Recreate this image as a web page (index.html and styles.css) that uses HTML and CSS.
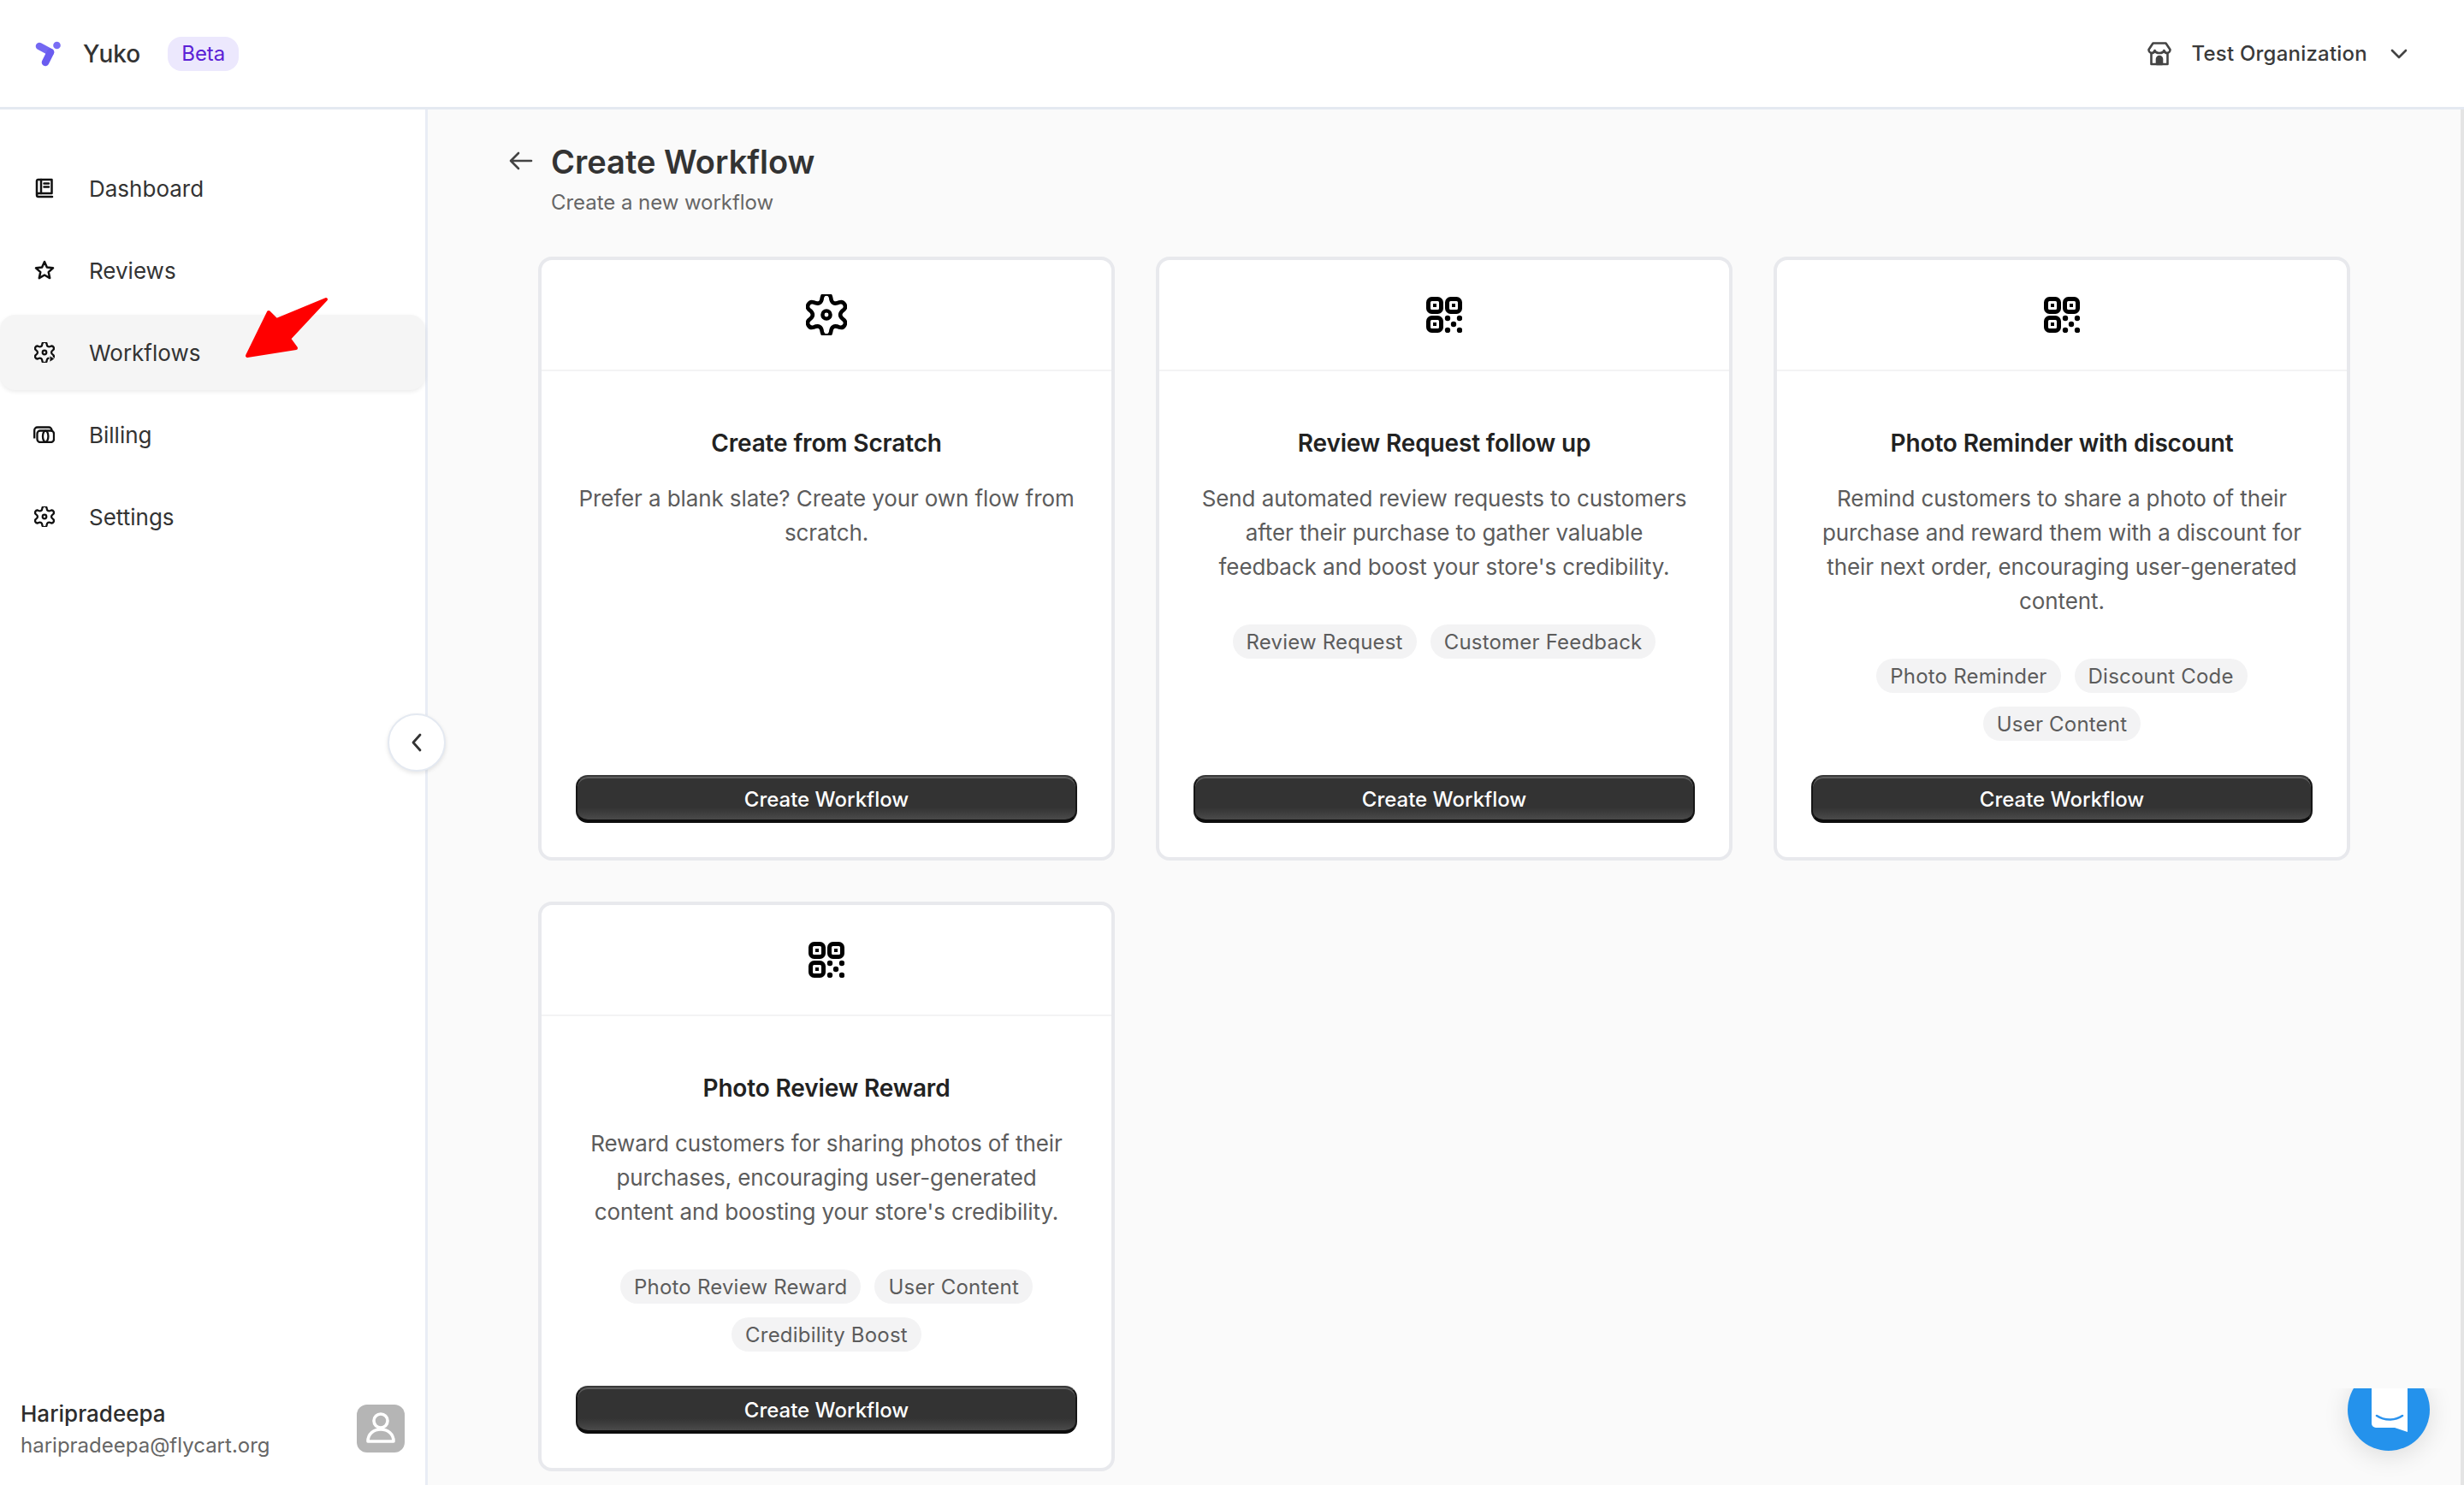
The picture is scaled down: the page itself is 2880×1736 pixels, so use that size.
FILE: index.html
```html
<!DOCTYPE html>
<html lang="en">
<head>
<meta charset="utf-8">
<title>Create Workflow</title>
<link rel="stylesheet" href="styles.css">
</head>
<body>
<svg class="defs" width="0" height="0" aria-hidden="true">
  <defs>
    <symbol id="gear" viewBox="0 0 24 24">
      <path d="M9.46 1.81A2.6 2.6 0 0 1 14.54 1.81Q15 6.8 19.55 4.7A2.6 2.6 0 0 1 22.09 9.1Q18 12 22.09 14.9A2.6 2.6 0 0 1 19.55 19.3Q15 17.2 14.54 22.19A2.6 2.6 0 0 1 9.46 22.19Q9 17.2 4.45 19.3A2.6 2.6 0 0 1 1.91 14.9Q6 12 1.91 9.1A2.6 2.6 0 0 1 4.45 4.7Q9 6.8 9.46 1.81Z" fill="none" stroke="currentColor" stroke-width="2.3" stroke-linejoin="round"/>
      <circle cx="12" cy="12" r="2.3" fill="none" stroke="currentColor" stroke-width="2.2"/>
    </symbol>
    <symbol id="qr" viewBox="0 0 42 42">
      <g fill="none" stroke="currentColor" stroke-width="5">
        <rect x="2.5" y="2.5" width="15" height="15" rx="4"/>
        <rect x="24.5" y="2.5" width="15" height="15" rx="4"/>
        <rect x="2.5" y="24.5" width="15" height="15" rx="4"/>
      </g>
      <g fill="currentColor">
        <rect x="8" y="8" width="4" height="4"/>
        <rect x="30" y="8" width="4" height="4"/>
        <rect x="8" y="30" width="4" height="4"/>
        <circle cx="25" cy="25" r="3.2"/>
        <circle cx="39" cy="25" r="3.2"/>
        <circle cx="32" cy="32" r="3.2"/>
        <circle cx="25" cy="39" r="3.2"/>
        <circle cx="39" cy="39" r="3.2"/>
      </g>
    </symbol>
  </defs>
</svg>

<header class="topbar">
  <div class="brand">
    <svg class="logo" viewBox="0 0 30 30">
      <path d="M5 6 18 13" stroke="#7468f2" stroke-width="8.500" stroke-linecap="round"/>
      <path d="M18 13 12 25" stroke="#6a5cf0" stroke-width="8.500" stroke-linecap="round"/>
      <circle cx="25.500" cy="5" r="4.300" fill="#7a6ef5"/>
    </svg>
    <span class="brand-name">Yuko</span>
    <span class="beta">Beta</span>
  </div>
  <div class="org">
    <svg class="org-icon" viewBox="0 0 28 28" fill="none" stroke="#444" stroke-width="2.600" stroke-linejoin="round" stroke-linecap="round">
      <path d="M6.500 1.500h15l5 7.500c0 2-1.500 4-3.600 4s-3-1.500-3.500-3c-.5 1.500-2 3-5.400 3s-4.900-1.500-5.400-3c-.5 1.500-1.400 3-3.500 3S1.500 11 1.500 9Z"/>
      <path d="M4.500 13v13h19V13"/>
      <path d="M11 26v-6a3 3 0 0 1 6 0v6Z" fill="#444"/>
    </svg>
    <span class="org-name">Test Organization</span>
    <svg class="org-chevron" viewBox="0 0 20 12" fill="none" stroke="#444" stroke-width="2.600" stroke-linecap="round" stroke-linejoin="round"><path d="M2 2l8 8 8-8"/></svg>
  </div>
</header>

<div class="shell">
  <aside class="sidebar">
    <nav class="nav">
      <a class="nav-item">
        <svg class="nav-icon" viewBox="0 0 24 24" fill="none" stroke="#111" stroke-width="2.500" stroke-linecap="round" stroke-linejoin="round"><path d="M3 20V3.500A1.500 1.500 0 0 1 4.500 2H20.500V18H5a2 2 0 0 0-2 2 2 2 0 0 0 2 2h16"/><path d="M8 2v16"/><path d="M11.500 6.500h5.500M11.500 10.500h5.500"/></svg>
        <span>Dashboard</span>
      </a>
      <a class="nav-item">
        <svg class="nav-icon" viewBox="0 0 24 24" fill="none" stroke="#111" stroke-width="2.500" stroke-linejoin="round"><path d="M12 2l2.900 6.500 7.100.8-5.300 4.800 1.500 7-6.200-3.600-6.200 3.600 1.500-7L2 9.300l7.100-.8Z"/></svg>
        <span>Reviews</span>
      </a>
      <a class="nav-item is-active">
        <svg class="nav-icon" viewBox="0 0 24 24"><use href="#gear"/><path d="M18 15.500l6 4-6 4Z" fill="#111" stroke="#f5f5f5" stroke-width="1"/></svg>
        <span>Workflows</span>
      </a>
      <a class="nav-item">
        <svg class="nav-icon bill-icon" viewBox="0 0 26 20" fill="none" stroke="#111" stroke-width="2.300" stroke-linejoin="round"><path d="M2.200 14.500V5A3.500 3.500 0 0 1 5.700 1.500H19A3.500 3.500 0 0 1 22.500 5"/><rect x="5.500" y="5.500" width="19.500" height="13.500" rx="3.500"/><ellipse cx="15.200" cy="12.200" rx="3.200" ry="6.500"/></svg>
        <span>Billing</span>
      </a>
      <a class="nav-item">
        <svg class="nav-icon" viewBox="0 0 24 24"><use href="#gear"/></svg>
        <span>Settings</span>
      </a>
    </nav>
    <div class="user">
      <div class="user-text">
        <div class="user-name">Haripradeepa</div>
        <div class="user-mail">haripradeepa@flycart.org</div>
      </div>
      <div class="avatar">
        <svg viewBox="0 0 56 56" fill="none" stroke="#fff" stroke-width="3.600"><circle cx="28" cy="19" r="8"/><path d="M13 43c0-9 7-14 15-14s15 5 15 14Z" stroke-linejoin="round"/></svg>
      </div>
    </div>
    <button class="collapse" aria-label="Collapse">
      <svg viewBox="0 0 14 24" fill="none" stroke="#333" stroke-width="2.800" stroke-linecap="round" stroke-linejoin="round"><path d="M11 3 3 12l8 9"/></svg>
    </button>
  </aside>

  <main class="main">
    <div class="page-head">
      <svg class="back" viewBox="0 0 28 22" fill="none" stroke="#444" stroke-width="2.600" stroke-linecap="round" stroke-linejoin="round"><path d="M26 11H2M11 2l-9 9 9 9"/></svg>
      <div>
        <h1 class="page-title">Create Workflow</h1>
        <p class="page-sub">Create a new workflow</p>
      </div>
    </div>

    <section class="cards">
      <article class="card">
        <div class="card-top"><svg class="card-icon gear-icon"><use href="#gear"/></svg></div>
        <div class="card-body">
          <h2 class="card-title">Create from Scratch</h2>
          <p class="card-desc">Prefer a blank slate? Create your own flow from scratch.</p>
          <button class="cta">Create Workflow</button>
        </div>
      </article>
      <article class="card">
        <div class="card-top"><svg class="card-icon"><use href="#qr"/></svg></div>
        <div class="card-body">
          <h2 class="card-title">Review Request follow up</h2>
          <p class="card-desc">Send automated review requests to customers after their purchase to gather valuable feedback and boost your store's credibility.</p>
          <div class="tags"><span class="tag">Review Request</span><span class="tag">Customer Feedback</span></div>
          <button class="cta">Create Workflow</button>
        </div>
      </article>
      <article class="card">
        <div class="card-top"><svg class="card-icon"><use href="#qr"/></svg></div>
        <div class="card-body">
          <h2 class="card-title">Photo Reminder with discount</h2>
          <p class="card-desc">Remind customers to share a photo of their purchase and reward them with a discount for their next order, encouraging user-generated content.</p>
          <div class="tags"><span class="tag">Photo Reminder</span><span class="tag">Discount Code</span><span class="tag">User Content</span></div>
          <button class="cta">Create Workflow</button>
        </div>
      </article>
      <article class="card">
        <div class="card-top"><svg class="card-icon"><use href="#qr"/></svg></div>
        <div class="card-body">
          <h2 class="card-title">Photo Review Reward</h2>
          <p class="card-desc">Reward customers for sharing photos of their purchases, encouraging user-generated content and boosting your store's credibility.</p>
          <div class="tags"><span class="tag">Photo Review Reward</span><span class="tag">User Content</span><span class="tag">Credibility Boost</span></div>
          <button class="cta">Create Workflow</button>
        </div>
      </article>
    </section>
  </main>
</div>

<svg class="arrow" viewBox="0 0 120 90"><path d="M4 71 61 62 53 51 96 5 38 29 29 20Z" fill="#ff0000" stroke="#ff0000" stroke-width="4" stroke-linejoin="round"/></svg>

<div class="chat">
  <div class="chat-ball">
    <svg viewBox="0 0 44 80" class="chat-glyph"><path d="M6 0h32a5 5 0 0 1 5 5v69l-15-5H6a5 5 0 0 1-5-5V5a5 5 0 0 1 5-5Z" fill="#fff"/><path d="M7 55c9 6 21 6 30 0" fill="none" stroke="#2b93ee" stroke-width="2.600" stroke-linecap="round"/></svg>
  </div>
</div>
</body>
</html>
```
FILE: styles.css
```css
* { box-sizing: border-box; }
html, body { margin: 0; height: 100%; }
body {
  position: relative;
  width: 2880px;
  height: 1736px;
  overflow: hidden;
  display: flex;
  flex-direction: column;
  font-family: Inter, "Liberation Sans", sans-serif;
  color: #333;
  background: #fafafa;
}
.defs { position: absolute; }

.topbar {
  height: 128px;
  flex: none;
  display: flex;
  align-items: center;
  justify-content: space-between;
  padding: 0 66px 0 41px;
  background: #fff;
  border-bottom: 3px solid #e4e9f1;
}
.brand { display: flex; align-items: center; }
.logo { width: 30px; height: 30px; }
.brand-name { margin-left: 26px; font-size: 28px; font-weight: 500; color: #333; }
.beta {
  margin-left: 32px;
  height: 40px;
  padding: 0 16px;
  display: flex;
  align-items: center;
  border-radius: 16px;
  background: #ece8fd;
  color: #5b21d6;
  font-size: 24px;
}
.org { display: flex; align-items: center; }
.org-icon { width: 28px; height: 28px; }
.org-name { margin-left: 23px; font-size: 24px; font-weight: 500; letter-spacing: .22px; color: #3a3a3a; }
.org-chevron { width: 20px; height: 12px; margin-left: 27px; }

.shell { flex: 1; display: flex; min-height: 0; }

.sidebar {
  position: relative;
  width: 500px;
  flex: none;
  display: flex;
  flex-direction: column;
  background: #fff;
  border-right: 3px solid #e9edf5;
}
.nav { display: flex; flex-direction: column; gap: 8px; padding-top: 48px; }
.nav-item {
  height: 88px;
  display: flex;
  align-items: center;
  padding-left: 40px;
  font-size: 26px;
  color: #333;
}
.nav-item span { margin-left: 40px; }
.nav-item.is-active {
  background: #f5f5f5;
  border-radius: 18px;
  box-shadow: 0 2px 5px rgba(0, 0, 0, .08);
}
.nav-icon { width: 24px; height: 24px; color: #111; flex: none; }
.bill-icon { width: 26px; height: 20px; margin-left: -2px; }
.bill-icon + span { margin-left: 40px; }

.user {
  margin-top: auto;
  display: flex;
  align-items: center;
  justify-content: space-between;
  padding: 0 24px 28px 24px;
}
.user-name { font-size: 26px; line-height: 37px; font-weight: 500; color: #2d2d2d; }
.user-mail { font-size: 24px; line-height: 37px; color: #666; }
.avatar {
  width: 56px;
  height: 56px;
  margin-bottom: 2px;
  border-radius: 12px;
  background: #b5b5b5;
}
.avatar svg { display: block; }

.collapse {
  position: absolute;
  top: 706px;
  right: -24px;
  width: 68px;
  height: 68px;
  padding: 0;
  display: flex;
  align-items: center;
  justify-content: center;
  border: 2px solid #e4e9f1;
  border-radius: 50%;
  background: #fff;
  box-shadow: 0 2px 5px rgba(0, 0, 0, .1);
}
.collapse svg { width: 14px; height: 24px; }

.main {
  flex: 1;
  min-width: 0;
  padding: 35px 129px 0 129px;
  border-right: 4px solid #e4e4e4;
  background: #fafafa;
}
.page-head { display: flex; align-items: flex-start; margin-left: -34px; }
.back { width: 28px; height: 22px; margin: 14px 21px 0 0; flex: none; }
.page-title { margin: 0; font-size: 38px; line-height: 52px; font-weight: 600; color: #333; }
.page-sub { margin: 2px 0 -1px; font-size: 24px; line-height: 40px; letter-spacing: -.05px; color: #666; }

.cards {
  margin-top: 44px;
  display: grid;
  grid-template-columns: repeat(3, minmax(0, 1fr));
  align-items: stretch;
  gap: 48px;
}
.card {
  display: flex;
  flex-direction: column;
  background: #fff;
  border: 4px solid #e8e9ed;
  border-radius: 16px;
}
.card-top {
  height: 130px;
  flex: none;
  display: flex;
  align-items: center;
  justify-content: center;
  border-bottom: 2px solid #f3f3f4;
}
.card-icon { width: 42px; height: 42px; color: #000; }
.gear-icon { width: 48px; height: 48px; }
.card-body {
  flex: 1;
  display: flex;
  flex-direction: column;
  align-items: center;
  padding: 64px 40px 40px;
}
.card-title { margin: 0; font-size: 28px; line-height: 40px; font-weight: 600; letter-spacing: -.15px; color: #222; text-align: center; }
.card-desc { margin: 25px 0 0; font-size: 26px; line-height: 40px; letter-spacing: -.1px; color: #5c5c5c; text-align: center; }
.tags { margin: 47px 0 40px; display: flex; flex-wrap: wrap; justify-content: center; gap: 16px; }
.tag {
  height: 40px;
  padding: 0 16px;
  display: flex;
  align-items: center;
  border-radius: 20px;
  background: #f3f3f4;
  font-size: 24px;
  letter-spacing: .2px;
  color: #5c5c5c;
}
.cta {
  width: 100%;
  height: 56px;
  margin-top: auto;
  padding: 2px 0 0;
  flex: none;
  font-family: inherit;
  font-size: 24px;
  font-weight: 500;
  color: #fff;
  border: 2px solid #161616;
  border-top-color: #3a3a3a;
  border-bottom: 4px solid #0d0d0d;
  border-radius: 14px;
  background: linear-gradient(#333 72%, #4a4a4a);
  box-shadow: inset 0 2px 0 #5c5c5c;
}

.arrow { position: absolute; left: 285px; top: 345px; width: 120px; height: 90px; }

.chat {
  position: absolute;
  left: 2683px;
  top: 1623px;
  width: 193px;
  height: 113px;
  overflow: hidden;
}
.chat-ball {
  position: absolute;
  left: 61px;
  top: -23px;
  width: 96px;
  height: 96px;
  border-radius: 50%;
  background: #2492ec;
  box-shadow: 0 6px 30px rgba(0, 0, 0, .12);
}
.chat-glyph { position: absolute; left: 27px; top: 0; width: 44px; height: 80px; }
```
